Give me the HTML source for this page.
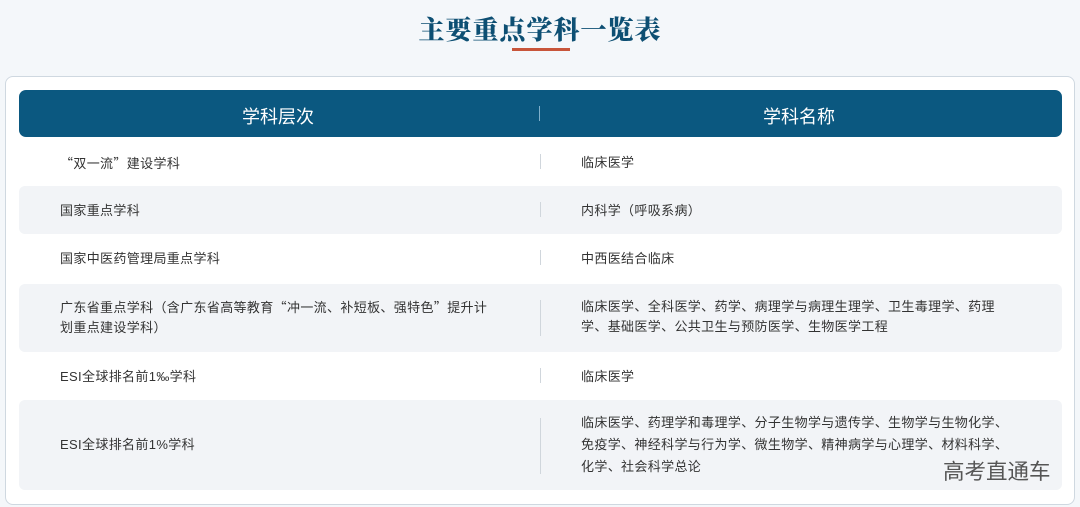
<!DOCTYPE html>
<html><head><meta charset="utf-8"><style>
*{margin:0;padding:0;box-sizing:border-box}
body{width:1080px;height:507px;background:#f4f7fa;font-family:"Liberation Sans","Noto Sans CJK SC",sans-serif;position:relative;overflow:hidden}
.q{font-family:"Noto Sans CJK SC",sans-serif}
.title{position:absolute;top:10px;left:0;width:1080px;text-align:center;font-family:"Liberation Serif","Noto Serif CJK SC",serif;font-weight:900;font-size:26px;color:#0d4f73;letter-spacing:1px}
.ul{position:absolute;left:512px;top:48px;width:58px;height:3px;background:#c8553a}
.card{position:absolute;left:5px;top:76px;width:1070px;height:429px;background:#fff;border:1px solid #cfd8e0;border-radius:8px}
.head{position:absolute;left:19px;top:90px;width:1043px;height:47px;background:#0b5880;border-radius:7px;color:#fff;font-size:18px}
.head span{position:absolute;top:13px}
.head i{position:absolute;left:520px;top:16px;width:1px;height:15px;background:#7fb0cc}
.row{position:absolute;left:19px;width:1043px;font-size:13px;letter-spacing:0.35px;color:#333;line-height:20px;border-radius:6px}
.g{background:#f2f4f7}
.row .l{position:absolute;left:41px}
.row .r{position:absolute;left:562px}
.row i{position:absolute;left:521px;width:1px;background:#d0d6dc}
.wm{position:absolute;left:943px;top:455px;font-size:21.5px;color:#555}
</style></head><body>
<div class="title">主要重点学科一览表</div>
<div class="ul"></div>
<div class="card"></div>
<div class="head"><span style="left:223px">学科层次</span><i></i><span style="left:744px">学科名称</span></div>
<div class="row" style="top:138px;height:48px"><div class="l" style="top:15px"><span class="q">“</span>双一流<span class="q">”</span>建设学科</div><i style="top:16px;height:15px"></i><div class="r" style="top:15px">临床医学</div></div>
<div class="row g" style="top:186px;height:48px"><div class="l" style="top:15px">国家重点学科</div><i style="top:16px;height:15px"></i><div class="r" style="top:15px">内科学（呼吸系病）</div></div>
<div class="row" style="top:234px;height:48px"><div class="l" style="top:15px">国家中医药管理局重点学科</div><i style="top:16px;height:15px"></i><div class="r" style="top:15px">中西医结合临床</div></div>
<div class="row g" style="top:284px;height:68px"><div class="l" style="top:13px">广东省重点学科（含广东省高等教育<span class="q">“</span>冲一流、补短板、强特色<span class="q">”</span>提升计<br>划重点建设学科）</div><i style="top:16px;height:36px"></i><div class="r" style="top:13px">临床医学、全科医学、药学、病理学与病理生理学、卫生毒理学、药理<br>学、基础医学、公共卫生与预防医学、生物医学工程</div></div>
<div class="row" style="top:352px;height:48px"><div class="l" style="top:15px">ESI全球排名前1‰学科</div><i style="top:16px;height:15px"></i><div class="r" style="top:15px">临床医学</div></div>
<div class="row g" style="top:400px;height:90px"><div class="l" style="top:35px">ESI全球排名前1%学科</div><i style="top:18px;height:56px"></i><div class="r" style="top:12px;line-height:22px">临床医学、药理学和毒理学、分子生物学与遗传学、生物学与生物化学、<br>免疫学、神经科学与行为学、微生物学、精神病学与心理学、材料科学、<br>化学、社会科学总论</div></div>
<div class="wm">高考直通车</div>
</body></html>
